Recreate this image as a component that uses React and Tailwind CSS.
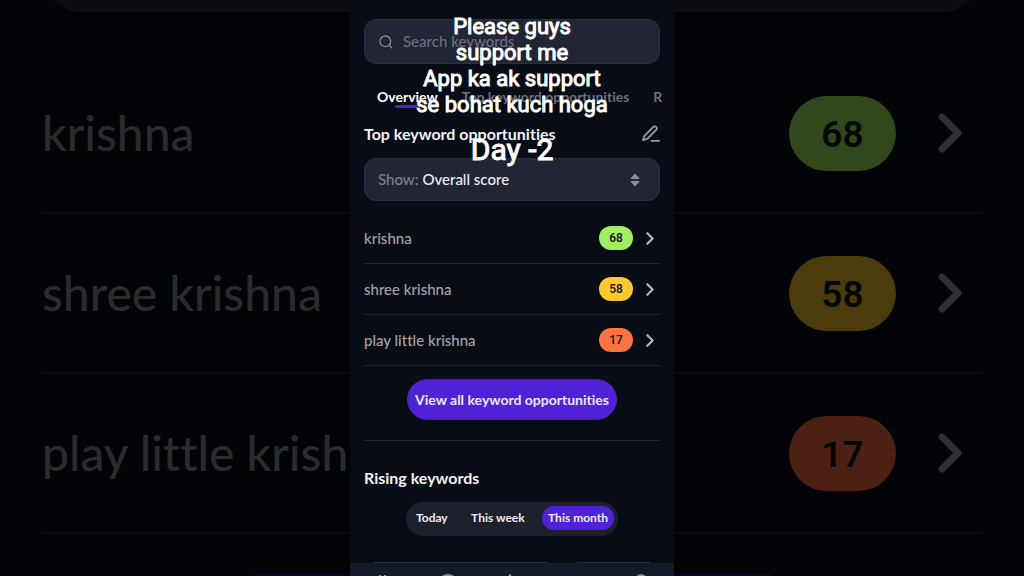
import { Search } from 'lucide-react';

const keywords = [
  { name: 'krishna', score: 68, pill: 'bg-[#a0ee63]', dimPill: 'bg-[#30481c]' },
  { name: 'shree krishna', score: 58, pill: 'bg-[#ffc92e]', dimPill: 'bg-[#4c3c0c]' },
  { name: 'play little krishna', score: 17, pill: 'bg-[#ff7340]', dimPill: 'bg-[#4c2113]' },
];

function Chevron({ className }) {
  return (
    <svg viewBox="0 0 24 40" fill="none" className={className}>
      <path
        d="M4 4l16 16L4 36"
        stroke="currentColor"
        strokeWidth="7"
        strokeLinecap="round"
        strokeLinejoin="round"
      />
    </svg>
  );
}

function PencilLine({ className }) {
  return (
    <svg
      viewBox="0 0 20 20"
      fill="none"
      stroke="currentColor"
      strokeWidth="2"
      strokeLinecap="round"
      strokeLinejoin="round"
      className={className}
    >
      <path d="M1.200 16.800l1.500-4.800L12.600 2.200a2.100 2.100 0 0 1 3 0l.2.2a2.100 2.100 0 0 1 0 3L6.200 15.200 1.200 16.800z" />
      <path d="M10.500 17.600H19" />
    </svg>
  );
}

// Enlarged, dimmed copy of the list that fills the sides of the video
function Backdrop() {
  return (
    <div
      aria-hidden="true"
      className="absolute inset-0 flex flex-col overflow-hidden bg-[#020307] px-[42px]"
    >
      <div className="-mt-20 h-[92px] shrink-0 rounded-b-[40px] border-b-2 border-[#0e1013] bg-[#0b0c10]" />
      <div className="mt-[42px]">
        {keywords.map((k) => (
          <div
            key={k.name}
            className="flex h-40 items-center border-b-2 border-[#0b0c0f] pr-5"
          >
            <span className="flex-1 text-[48px] font-medium text-[#2b2b2d]">{k.name}</span>
            <span
              className={`flex h-[75px] w-[107px] items-center justify-center rounded-full pt-1 font-[Roboto] text-[37px] font-semibold text-[#030805] ${k.dimPill}`}
            >
              {k.score}
            </span>
            <Chevron className="ml-[42px] h-10 w-6 text-[#303034]" />
          </div>
        ))}
      </div>
      <div className="mx-auto mt-10 h-32 w-2/3 shrink-0 rounded-full bg-[#0a0424]" />
    </div>
  );
}

function BottomNav() {
  return (
    <nav className="flex h-14 shrink-0 items-start justify-between bg-[#151a29] px-6 pt-[11px] text-[#8b8e9b]">
      <a href="#home" aria-label="Home">
        <svg viewBox="0 0 20 20" className="size-5" fill="none" stroke="currentColor" strokeWidth="2">
          <path d="M6 1v18M11 1v18" />
        </svg>
      </a>
      <a href="#keywords" aria-label="Keywords">
        <svg viewBox="0 0 20 20" className="size-5" fill="none" stroke="currentColor" strokeWidth="2">
          <circle cx="10" cy="10" r="9" />
        </svg>
      </a>
      <a href="#optimize" aria-label="Optimize">
        <svg viewBox="0 0 20 20" className="size-5" fill="none" stroke="currentColor" strokeWidth="2">
          <path d="M8 1l8 17H0z" strokeLinejoin="round" />
        </svg>
      </a>
      <a href="#learn" aria-label="Learn">
        <svg viewBox="0 0 20 20" className="size-5" />
      </a>
      <a href="#profile" aria-label="Profile">
        <svg viewBox="0 0 20 20" className="size-5" fill="none" stroke="currentColor" strokeWidth="2">
          <circle cx="11" cy="6" r="5" />
          <path d="M3 19c0-4 4-6 8-6s8 2 8 6" />
        </svg>
      </a>
    </nav>
  );
}

function Caption() {
  return (
    <div className="pointer-events-none absolute inset-x-0 top-[14px] text-center font-[Roboto] text-white [-webkit-text-stroke:1px_white]">
      <p className="text-[22px] leading-[26px]">
        Please guys
        <br />
        support me
        <br />
        App ka ak support
        <br />
        se bohat kuch hoga
      </p>
      <p className="mt-3 text-[30px] leading-[40px]">Day -2</p>
    </div>
  );
}

function Phone() {
  return (
    <main className="relative mx-auto flex h-full w-full max-w-[324px] flex-col overflow-hidden bg-[#080c15]">
      <div className="shrink-0 px-[14px] pt-[19px]">
        <label className="flex h-[45px] items-center gap-[9px] rounded-xl border border-[#2c3040] bg-[#212534] px-[13px]">
          <Search className="size-4 shrink-0 text-[#85899a]" strokeWidth={2} />
          <input
            type="search"
            aria-label="Search keywords"
            placeholder="Search keywords"
            className="min-w-0 flex-1 bg-transparent text-[15px] font-medium text-white outline-none placeholder:text-[#6d7182]"
          />
        </label>

        <div
          role="tablist"
          className="mt-6 flex gap-6 pl-[13px] text-[14px] leading-[17px] font-bold whitespace-nowrap text-[#6d7182]"
        >
          <button role="tab" aria-selected="true" className="flex flex-col items-center text-white">
            Overview
            <span className="h-[3px] w-6 rounded-full bg-[#4f22d8]" />
          </button>
          <button role="tab" aria-selected="false" className="self-start">
            Top keyword opportunities
          </button>
          <button
            role="tab"
            aria-selected="false"
            aria-label="Rising keywords"
            className="ml-auto self-start"
          >
            R
          </button>
        </div>

        <div className="mt-4 flex h-5 items-center justify-between">
          <h2 className="text-[16px] font-bold text-[#f2f2f5]">Top keyword opportunities</h2>
          <button aria-label="Edit" className="text-[#9a9ca8]">
            <PencilLine className="size-[18px]" />
          </button>
        </div>

        <div className="mt-[14px] flex h-[43px] items-center gap-1 rounded-xl border border-[#2c3040] bg-[#212534] px-[13px] text-[15px] font-medium">
          <label htmlFor="show" className="text-[#7c8091]">
            Show:
          </label>
          <select
            id="show"
            className="flex-1 appearance-none bg-transparent text-[#eeeef3] outline-none"
          >
            <option>Overall score</option>
          </select>
          <svg
            viewBox="0 0 10 14"
            className="mr-[6px] h-[14px] w-[10px] text-[#8a8e9e]"
            fill="currentColor"
            stroke="currentColor"
            strokeLinejoin="round"
          >
            <path d="M5 1l4 4.500H1zM5 13L1 8.500h8z" />
          </svg>
        </div>

        <ul className="mt-3">
          {keywords.map((k) => (
            <li key={k.name} className="border-b border-[#22252e]">
              <a href="#keyword" className="flex h-[50px] items-center pr-[6px]">
                <span className="flex-1 text-[15px] font-medium text-[#a3a4ab]">{k.name}</span>
                <span
                  className={`flex h-6 w-[34px] items-center justify-center rounded-full font-[Roboto] text-[12px] font-semibold text-[#1a1c20] ${k.pill}`}
                >
                  {k.score}
                </span>
                <Chevron className="ml-[13px] h-[13px] w-2 text-[#b2b3ba]" />
              </a>
            </li>
          ))}
        </ul>

        <button className="mx-auto mt-[13px] flex h-[41px] w-[210px] items-center justify-center rounded-full border border-[#4526ac] bg-[#4f22d8] text-[14px] font-bold whitespace-nowrap text-[#ece8fb]">
          View all keyword opportunities
        </button>
        <hr className="mt-5 border-[#22252e]" />

        <h2 className="mt-[27px] text-[16px] leading-5 font-bold text-[#f2f2f5]">
          Rising keywords
        </h2>
        <div className="mx-auto mt-[14px] flex h-[34px] w-[212px] items-center justify-between rounded-full bg-[#1d202b] pr-1 pb-[2px] pl-[10px] text-[12px] font-bold whitespace-nowrap text-[#eeeef3]">
          <button>Today</button>
          <button className="pl-[6px]">This week</button>
          <button className="h-6 rounded-full bg-[#4f22d8] px-[6px]">This month</button>
        </div>

        <div className="mt-[26px] flex justify-between px-[9px]">
          <div className="h-px w-[175px] bg-[#2a2e39]" />
          <div className="h-px w-[74px] bg-[#2a2e39]" />
        </div>
      </div>
      <BottomNav />
    </main>
  );
}

export default function App() {
  return (
    <div className="relative h-screen overflow-hidden bg-black font-[Lato,sans-serif] [font-variant-ligatures:none]">
      <Backdrop />
      <Phone />
      <Caption />
    </div>
  );
}
